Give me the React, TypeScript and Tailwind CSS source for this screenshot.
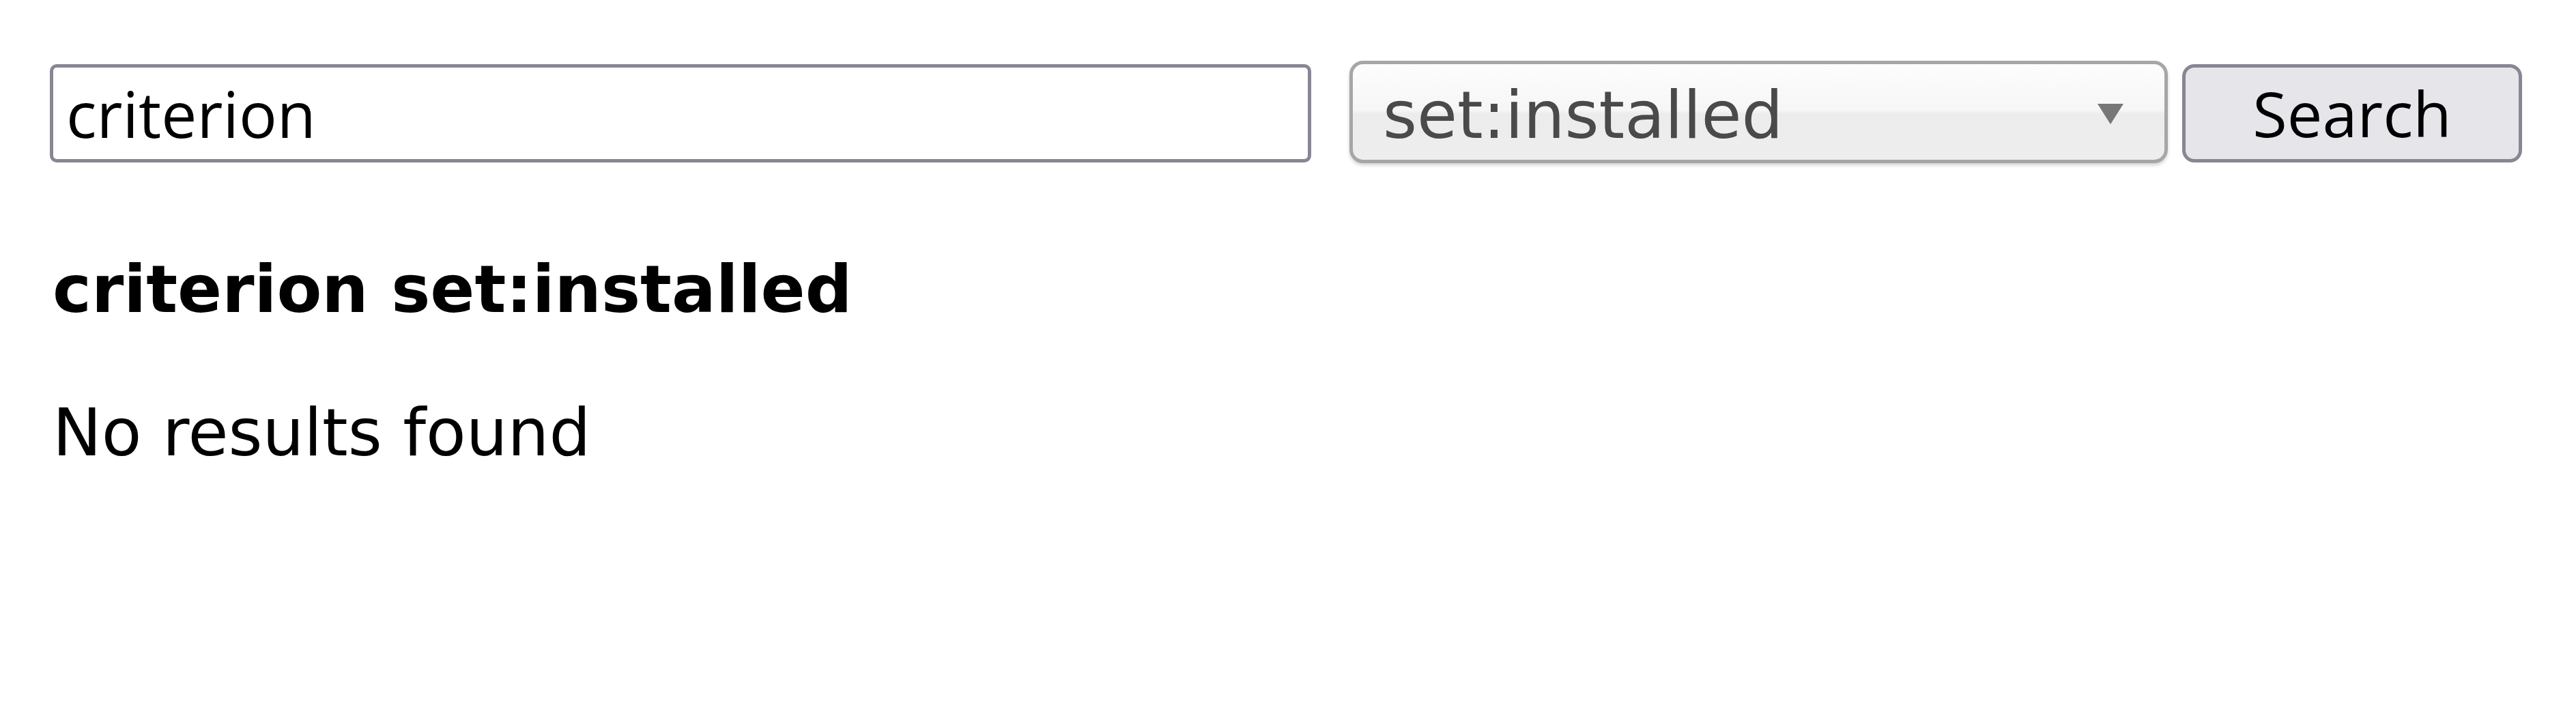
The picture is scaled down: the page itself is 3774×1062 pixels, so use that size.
export default function App() {
  return (
    <div className="min-h-screen bg-white pl-[73px] pt-[89px] font-['DejaVu_Sans',sans-serif] text-black">
      {/* search bar */}
      <form className="flex items-start">
        <input
          type="text"
          value="criterion"
          readOnly
          className="mt-[5px] h-[144px] w-[1848px] rounded-[10px] border-[5px] border-[#878692] bg-white pl-[19px] font-['Open_Sans',sans-serif] text-[93px] leading-[126px] text-black outline-none"
        />
        <div className="ml-[56px] flex h-[150px] w-[1199px] items-start rounded-[20px] border-[5px] border-[#a6a6a6] bg-[linear-gradient(to_bottom,#fdfdfd_0%,#f6f6f6_48%,#ececec_52%,#eeeeee_100%)] pl-[44px] shadow-[0_3px_5px_rgba(0,0,0,0.18)]">
          <span className="pt-[19px] text-[96px] leading-[112px] text-[#4a4a4a]">set:installed</span>
          <svg className="ml-auto mr-[60px] mt-[58px]" width="38" height="30" viewBox="0 0 38 30">
            <polygon points="0,0 38,0 19,30" fill="#777777" />
          </svg>
        </div>
        <button
          type="submit"
          className="ml-[21px] mt-[5px] h-[144px] w-[498px] rounded-[18px] border-[5px] border-[#878692] bg-[#e6e5ea] font-['Open_Sans',sans-serif] text-[92px] leading-[124px] text-black"
        >
          Search
        </button>
      </form>

      <h1 className="mt-[129px] pl-[4px] text-[96px] font-bold leading-[112px]">criterion set:installed</h1>
      <p className="mt-[98px] pl-[4px] text-[96px] leading-[112px]">No results found</p>
    </div>
  );
}
